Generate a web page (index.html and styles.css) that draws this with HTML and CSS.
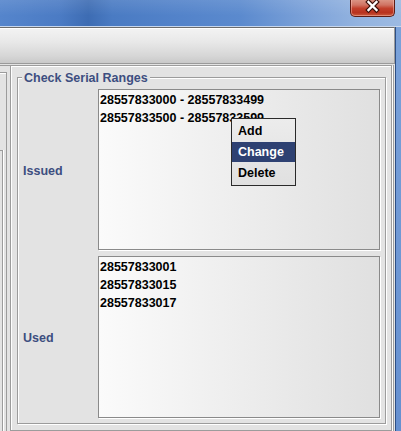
FILE: index.html
```html
<!DOCTYPE html>
<html>
<head>
<meta charset="utf-8">
<link rel="stylesheet" href="styles.css">
</head>
<body>
<div class="window">
  <div class="titlebar">
    <div class="close-btn">
      <svg width="45" height="17" viewBox="0 0 45 17">
        <path d="M18.5 4 L26.5 12 M26.5 4 L18.5 12" stroke="#3a0f0a" stroke-width="4.6" stroke-linecap="square" fill="none"/>
        <path d="M18.5 4 L26.5 12 M26.5 4 L18.5 12" stroke="#ffffff" stroke-width="2.4" stroke-linecap="square" fill="none"/>
      </svg>
    </div>
  </div>
  <div class="frame">
    <div class="client">
      <div class="toolbar"></div>
      <div class="main">
        <div class="left-stub">
          <div class="stub-box">
            <div class="stub-inner"></div>
          </div>
        </div>
        <div class="panel">
          <div class="group">
            <div class="group-title">Check Serial Ranges</div>
            <div class="group-grid">
              <div class="field-label">Issued</div>
              <div class="list">
                <div>28557833000 - 28557833499</div>
                <div>28557833500 - 28557833599</div>
              </div>
              <div class="field-label">Used</div>
              <div class="list">
                <div>28557833001</div>
                <div>28557833015</div>
                <div>28557833017</div>
              </div>
            </div>
          </div>
        </div>
      </div>
    </div>
    <div class="frame-right"></div>
  </div>
  <div class="popup">
    <div class="menu-item">Add</div>
    <div class="menu-item active">Change</div>
    <div class="menu-item">Delete</div>
  </div>
</div>
</body>
</html>
```
FILE: styles.css
```css
html, body {
  margin: 0;
  padding: 0;
}
body {
  width: 401px;
  height: 431px;
  overflow: hidden;
  background: #e3e3e3;
  font-family: "Liberation Sans", Arial, sans-serif;
}
.window {
  position: relative;
  display: flex;
  flex-direction: column;
  height: 431px;
  overflow: hidden;
}
.titlebar {
  position: relative;
  flex: none;
  height: 26px;
  border-bottom: 1px solid #c7d6ec;
  background:
    linear-gradient(to bottom, rgba(255,255,255,0.10), rgba(255,255,255,0) 60%),
    linear-gradient(to right, #5585cc 0%, #4b7bc4 15%, #3d6cb3 22%, #4a7bc3 28%, #5383ca 45%, #5b8ace 60%, #7fa4da 78%, #94b4e0 90%, #9cbae2 100%);
}
.close-btn {
  position: absolute;
  left: 350px;
  top: -1px;
  width: 45px;
  height: 18px;
  box-sizing: border-box;
  border: 1px solid #5e1c14;
  border-top: none;
  border-radius: 0 0 5px 5px;
  background: linear-gradient(to bottom, #dd9a8a 0%, #d07464 35%, #c2402c 55%, #b8321f 80%, #c95a3c 100%);
  box-shadow: inset 0 0 0 1px rgba(255,200,190,0.45);
}
.close-btn svg {
  display: block;
  margin: -1px 0 0 -1px;
}
.frame {
  flex: 1;
  display: flex;
  min-height: 0;
}
.client {
  flex: 1;
  display: flex;
  flex-direction: column;
  background: #e3e3e3;
}
.frame-right {
  width: 5px;
  border-left: 1px solid #2d4f85;
  background: linear-gradient(to bottom, #7aa2da, #6690d0);
}
.toolbar {
  flex: none;
  height: 37px;
  box-sizing: border-box;
  border-top: 1px solid #6c6c6c;
  border-bottom: 1px solid #9a9a9a;
  border-right: 1px solid #9a9a9a;
  box-shadow: inset 0 1px 0 #ffffff;
  background: linear-gradient(to bottom, #f3f3f3 0%, #e8e8e8 40%, #d6d6d6 80%, #c9c9c9 100%);
  margin-bottom: 1px;
}
.main {
  flex: 1;
  display: flex;
  min-height: 0;
  margin-right: 1px;
  border-right: 1px solid #a0a0a0;
}
.left-stub {
  width: 10px;
  flex: none;
  display: flex;
  flex-direction: column;
  border-top: 1px solid #9c9c9c;
}
.stub-box {
  flex: 1;
  display: flex;
  flex-direction: column;
  margin-top: 6px;
  width: 6px;
  border-top: 1px solid #9c9c9c;
  border-right: 1px solid #9c9c9c;
  box-shadow: inset 0 1px 0 #ffffff;
}
.stub-inner {
  flex: 1;
  margin-top: 77px;
  width: 2px;
  border-top: 1px solid #9c9c9c;
  border-right: 1px solid #9c9c9c;
  box-shadow: 1px 0 0 #ffffff;
}
.panel {
  flex: 1;
  display: flex;
  flex-direction: column;
  margin-right: 1px;
  padding: 11px 5px 6px 6px;
  border: 1px solid #9c9c9c;
  box-shadow: inset 1px 1px 0 #ffffff, 1px 1px 0 #ffffff;
}
.group {
  flex: 1;
  display: flex;
  flex-direction: column;
  padding: 0 5px 5px 5px;
  border: 1px solid #9c9c9c;
  box-shadow: inset 1px 1px 0 #ffffff, 1px 1px 0 #ffffff;
}
.group-title {
  align-self: flex-start;
  margin: -7px 0 0 -1px;
  padding: 0 2px;
  background: #e3e3e3;
  color: #3d4e80;
  font-weight: bold;
  font-size: 12.5px;
  line-height: 14px;
  white-space: nowrap;
}
.group-grid {
  flex: 1;
  min-height: 0;
  margin-top: 4px;
  display: grid;
  grid-template-columns: 75px 1fr;
  grid-template-rows: 161px 1fr;
  row-gap: 6px;
}
.field-label {
  align-self: center;
  padding-top: 2px;
  color: #3d4e80;
  font-weight: bold;
  font-size: 12.5px;
  line-height: 14px;
}
.list {
  border: 1px solid #8a8a8a;
  box-shadow: 1px 1px 0 #ffffff;
  background: linear-gradient(to right, #fbfbfb 0%, #f0f0f0 40%, #e0e0e0 100%);
  padding: 1px 0 0 1px;
  color: #000;
  font-weight: bold;
  font-size: 12.5px;
  line-height: 18px;
  white-space: nowrap;
  overflow: hidden;
}
.popup {
  position: absolute;
  left: 231px;
  top: 118px;
  width: 65px;
  height: 68px;
  box-sizing: border-box;
  padding: 2px 0 1px 0;
  border: 1px solid #2a2a2a;
  background: linear-gradient(to bottom, #ececec, #e0e0e0);
  font-weight: bold;
  font-size: 12.5px;
}
.menu-item {
  height: 21px;
  line-height: 21px;
  padding-left: 6px;
  color: #000;
}
.menu-item.active {
  height: 20px;
  line-height: 20px;
  margin-bottom: 1px;
  background: #2e4172;
  color: #ffffff;
}
```
